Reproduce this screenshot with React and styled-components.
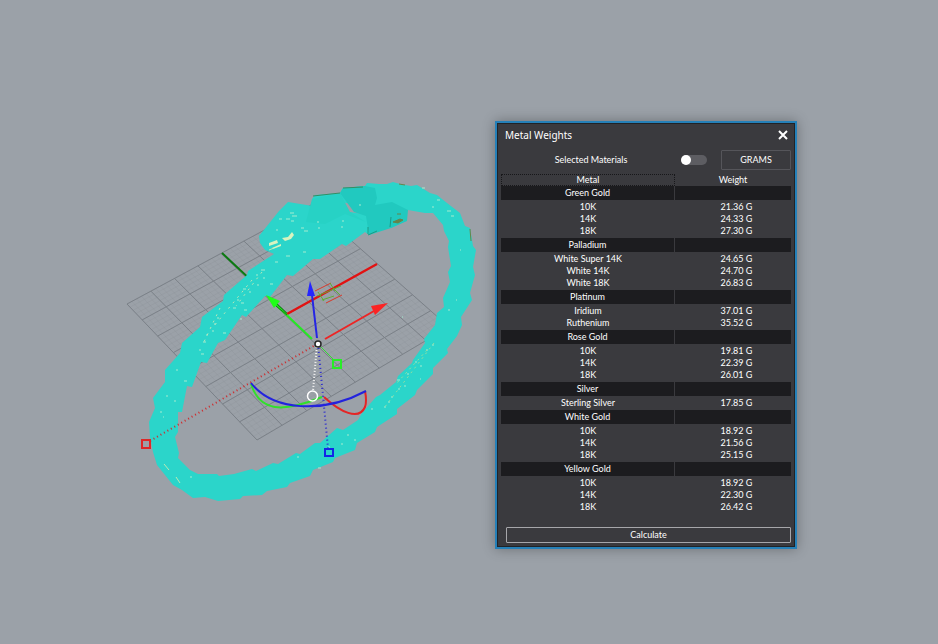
import React,{useState} from 'react'
import styled,{createGlobalStyle} from 'styled-components'

const groups = [
  {name:'Green Gold',items:[['10K','21.36 G'],['14K','24.33 G'],['18K','27.30 G']]},
  {name:'Palladium',items:[['White Super 14K','24.65 G'],['White 14K','24.70 G'],['White 18K','26.83 G']]},
  {name:'Platinum',items:[['Iridium','37.01 G'],['Ruthenium','35.52 G']]},
  {name:'Rose Gold',items:[['10K','19.81 G'],['14K','22.39 G'],['18K','26.01 G']]},
  {name:'Silver',items:[['Sterling Silver','17.85 G']]},
  {name:'White Gold',items:[['10K','18.92 G'],['14K','21.56 G'],['18K','25.15 G']]},
  {name:'Yellow Gold',items:[['10K','18.92 G'],['14K','22.30 G'],['18K','26.42 G']]},
]

// corners of the construction plane: left, top, right, bottom
const corners = [[127,304],[311,205],[449,327],[257,440]]

// unit square -> screen quad
const project = (u,v)=>{
  const [[x0,y0],[x1,y1],[x2,y2],[x3,y3]] = corners
  const dx1 = x1-x2, dx2 = x3-x2, dx3 = x0-x1+x2-x3
  const dy1 = y1-y2, dy2 = y3-y2, dy3 = y0-y1+y2-y3
  const det = dx1*dy2-dx2*dy1
  const g = (dx3*dy2-dx2*dy3)/det
  const h = (dx1*dy3-dx3*dy1)/det
  const w = g*u+h*v+1
  return [((x1-x0+g*x1)*u+(x3-x0+h*x3)*v+x0)/w,((y1-y0+g*y1)*u+(y3-y0+h*y3)*v+y0)/w]
}

const gridPath = (count)=>{
  let d = ''
  for(let i=0;i<=count;i++){
    const t = i/count
    d += `M${project(t,0)}L${project(t,1)}M${project(0,t)}L${project(1,t)}`
  }
  return d
}

const outer = '288,202 279,211 259,236 260,243 265,250 274,254 248,271 247,275 224,295 223,301 202,317 200,327 182,343 180,353 165,370 165,382 153,398 155,408 149,422 150,437 153,452 157,465 165,475 173,485 182,490 193,498 205,497 218,501 240,499 243,496 262,495 267,491 287,487 290,483 310,476 313,470 333,462 335,458 355,450 357,443 375,432 377,427 397,414 397,409 415,395 417,390 433,374 433,368 448,353 447,349 457,336 462,325 461,317 472,300 470,293 475,275 473,267 476,250 473,246 470,228 465,226 460,213 447,203 437,195 430,193 417,185 411,186 400,184 393,182 387,184 379,184 367,183 365,186 343,188 340,193 315,195 312,199'
const inner = '408,210 425,213 433,213 443,225 444,231 449,241 448,247 451,266 448,272 450,282 443,298 444,307 437,313 435,325 424,339 425,343 413,360 412,363 398,376 396,382 380,395 376,397 362,413 358,420 343,430 337,428 320,443 315,443 300,454 296,453 278,464 273,463 256,471 252,469 234,474 219,476 217,474 198,474 190,470 178,458 179,453 175,437 178,432 178,412 182,412 187,386 192,387 201,362 207,363 218,343 225,340 242,315 246,317 265,296 270,297 287,275 293,276 313,259 320,259 342,244 346,246 365,232 369,235 385,227 391,228 406,221'

const specks = 'M279 219h3M290 213h4M292 216h5M286 219h4M291 221h3M301 228h3M304 231h4M276 230h2M303 252h3M286 256h4M275 262h3M261 270h4M256 275h2M263 278h2M270 284h3M257 285h2M243 289h3M249 292h2M237 300h2M241 303h3M233 308h3M244 310h3M217 318h2M214 324h2M212 331h2M223 333h3M206 335h2M203 342h3M199 350h2M201 354h3M176 370h2M184 381h3M166 396h2M174 401h2M160 412h2M163 417h1M359 205h2M342 221h2M341 227h2M317 222h2M318 228h2M437 200h3M432 207h2M447 211h4M451 216h3M422 188h3M397 380h3M404 386h2M398 389h2M407 374h2M415 362h2M420 366h2M426 350h2M432 345h2M388 402h2M384 407h2M371 409h2M347 435h2M328 447h2M354 440h2M341 444h2M297 457h2M318 468h3M190 477h2M402 317h1M448 310h2M456 300h1M420 379h1M240 319h2M460 250h1M391 397h2'

function Viewport() {
  return (
    <Scene viewBox="0 0 938 644" preserveAspectRatio="xMinYMin slice" role="img" aria-label="Bracelet model">
      <path d={gridPath(40)} fill="none" stroke="#838990" strokeWidth="1" opacity="0.18" />
      <path d={gridPath(8)} fill="none" stroke="#7b8188" strokeWidth="1" />
      <path d="M222 253L287 314" stroke="#0b7a10" strokeWidth="2" />
      <path d="M287 314L377 264" stroke="#e21212" strokeWidth="2.4" />
      <path d="M315 291L331 283M326 303L342 295" stroke="#d93a2a" strokeWidth="1" />
      <path d="M317 296L341 286M322 300L334 296M330 283l5 8M318 292l6 9M334 289l6 6" stroke="#5cae35" strokeWidth="1" />

      <polygon points={`${outer} ${inner}`} fill="#2bd5ca" />
      <polygon points="312,199 340,193 350,212 366,222 345,214 325,224 306,222" fill="#27d2c5" />
      <polygon points="340,193 343,188 365,186 375,188 377,198 375,205 392,202 408,210 407,221 391,228 369,235 366,216 354,212" fill="#21c9bf" />
      <path d="M313 196L340 193M343 188L363 187" fill="none" stroke="#368c64" strokeWidth="1" />
      <path d="M399 184l6 1M393 222l7 -3l3 1l-5 3zM397 214l4 0M470 229l1 12" fill="#66844a" stroke="#66844a" strokeWidth="1" />
      <path d="M391 217l-1 10M368 227v7M368 235l9 -4" fill="none" stroke="#1c9a84" strokeWidth="1" />
      <path d="M269 243l8 -3l1 3l-9 3zM272 248l9 -4v2l-8 3zM282 238l6 -1l4 -5l2 3l-3 4l-6 2z" fill="#d8f3bf" />
      <path d="M164 464l5 6M176 477l4 6M269 250l5 -2" stroke="#bce9b4" strokeWidth="1" />
      <path d={specks} stroke="#a4ecd0" strokeWidth="1" />
      <path d="M252 280L214 326M220 308L203 344M262 272L236 306" stroke="#b9e8b8" strokeWidth="1" strokeDasharray="2 5" />
      <path d="M434 343L384 408M427 350L396 384" stroke="#93dfa0" strokeWidth="1" strokeDasharray="2 4" />

      <path d="M317 344L150 441" stroke="#cf2a2c" strokeWidth="2" strokeDasharray="1 3" />
      <path d="M317 344L313 391" stroke="#f4f4f4" strokeWidth="2" strokeDasharray="1 2" />
      <path d="M251 384C260 412 282 413 322 397" fill="none" stroke="#31e02b" strokeWidth="2" />
      <path d="M324 397C340 412 359 421 365 407Q367 401 365 391" fill="none" stroke="#e52525" strokeWidth="2" />
      <path d="M251 383C273 411 323 414 366 391" fill="none" stroke="#2323dd" strokeWidth="2" />
      <path d="M318 344L328 448" stroke="#2929cf" strokeWidth="2" strokeDasharray="1 3" />
      <path d="M312 339L275 304" stroke="#24ea21" strokeWidth="2" />
      <polygon points="266,295 280,301 274,308" fill="#1fff18" />
      <path d="M276 306L287 315" stroke="#11830f" strokeWidth="1" />
      <path d="M321 347L334 360" stroke="#33dc31" strokeWidth="1" />
      <path d="M317 338L312 295" stroke="#2525e5" strokeWidth="2" />
      <polygon points="310,281 315,296 307,296" fill="#2525ff" />
      <path d="M325 339L374 311" stroke="#ed2525" strokeWidth="2" />
      <polygon points="388,303 371,306 375,315" fill="#fb2424" />
      <circle cx="318" cy="344" r="3" fill="#fff" stroke="#262626" strokeWidth="1.5" />
      <circle cx="312.5" cy="396" r="5" fill="none" stroke="#fff" strokeWidth="1.5" />
      <rect x="333" y="360" width="8" height="8" fill="none" stroke="#28ed27" strokeWidth="2" />
      <rect x="142" y="440" width="8" height="8" fill="none" stroke="#de2727" strokeWidth="2" />
      <rect x="325" y="449" width="8" height="7" fill="none" stroke="#1326e6" strokeWidth="2" />
    </Scene>
  )
}

function MetalWeights() {
  const [selected,setSelected]=useState(false)
  return (
    <Panel aria-label="Metal Weights">
      <TitleBar>
        <h1>Metal Weights</h1>
        <CloseButton type="button" aria-label="Close">
          <svg width="10" height="10" viewBox="0 0 10 10"><path d="M1 1L9 9M9 1L1 9" stroke="#fff" strokeWidth="2" /></svg>
        </CloseButton>
      </TitleBar>
      <Options>
        <label htmlFor="selected">Selected Materials</label>
        <Toggle id="selected" type="checkbox" checked={selected} onChange={(e)=>setSelected(e.target.checked)} />
        <UnitButton type="button">GRAMS</UnitButton>
      </Options>
      <WeightTable>
        <thead>
          <tr><HeadCell $outlined>Metal</HeadCell><HeadCell>Weight</HeadCell></tr>
        </thead>
        {
          groups.map((group)=>(
            <tbody key={group.name}>
              <GroupRow><th scope="rowgroup">{group.name}</th><td></td></GroupRow>
              {group.items.map(([metal,weight])=>(
                <ItemRow key={metal}><td>{metal}</td><td>{weight}</td></ItemRow>
              ))}
            </tbody>
          ))
        }
      </WeightTable>
      <CalculateButton type="button">Calculate</CalculateButton>
    </Panel>
  )
}

function App() {
  return (
    <Workspace>
      <GlobalStyle />
      <Viewport />
      <MetalWeights />
    </Workspace>
  )
}

const GlobalStyle = createGlobalStyle`
  *{
    box-sizing:border-box;
  }
  body{
    margin:0;
    background-color:#9ba1a8;
    font-family:Lato,"Open Sans",sans-serif;
    font-size:9px;
    line-height:12px;
    color:#fff;
  }
  button{
    font:inherit;
    color:inherit;
    padding:0;
    cursor:pointer;
  }
`

const Workspace = styled.main`
  position:relative;
  min-height:100vh;
  overflow:hidden;
`

const Scene = styled.svg`
  display:block;
  width:100%;
  height:100vh;
`

// floats over the viewport
const Panel = styled.section`
  position:absolute;
  left:495px;
  top:121px;
  width:302px;
  padding:4px;
  background-color:#3a3a3e;
  border:2px solid #2580b8;
  box-shadow:inset 0 0 0 1px #202327,0 0 12px rgba(0,0,0,0.3);
`

const TitleBar = styled.header`
  display:flex;
  justify-content:space-between;
  align-items:center;
  height:16px;
  padding:0 3px 0 4px;
  h1{
    margin:0;
    font-family:"Noto Sans","Open Sans",sans-serif;
    font-size:10px;
    font-weight:400;
  }
`

const CloseButton = styled.button`
  display:flex;
  background:none;
  border:none;
`

const Options = styled.div`
  display:grid;
  grid-template-columns:1fr 40px 70px;
  align-items:center;
  height:20px;
  margin:7px 0 4px;
  label{
    text-align:center;
  }
`

const Toggle = styled.input`
  appearance:none;
  display:flex;
  width:26px;
  height:10px;
  margin:0;
  border-radius:5px;
  background-color:#5d5d62;
  cursor:pointer;
  &::before{
    content:"";
    width:10px;
    height:10px;
    border-radius:50%;
    background-color:#fff;
  }
  &:checked{
    justify-content:flex-end;
    background-color:#2580b8;
  }
`

const UnitButton = styled.button`
  height:20px;
  background:none;
  border:1px solid #55555a;
  border-radius:1px;
`

const WeightTable = styled.table`
  width:100%;
  table-layout:fixed;
  border-collapse:separate;
  border-spacing:0;
  text-align:center;
  th,td{
    padding:0;
    font-weight:400;
  }
`

const HeadCell = styled.th`
  width:${({$outlined})=>$outlined?'60%':'40%'};
  height:12px;
  outline:${({$outlined})=>$outlined?'1px dotted #17171a':'none'};
  outline-offset:-1px;
`

const GroupRow = styled.tr`
  height:14px;
  background-color:#1c1c1f;
  th{
    border-right:1px solid #3a3a3e;
  }
`

const ItemRow = styled.tr`
  td:last-child{
    padding-left:7px;
  }
  &:nth-child(2) td{
    padding-top:1px;
  }
  &:last-child td{
    padding-bottom:1px;
  }
`

const CalculateButton = styled.button`
  display:block;
  width:calc(100% - 5px);
  height:16px;
  margin:13px 0 0 5px;
  background:none;
  border:1px solid #a6a6aa;
  border-radius:1px;
`

export default App
